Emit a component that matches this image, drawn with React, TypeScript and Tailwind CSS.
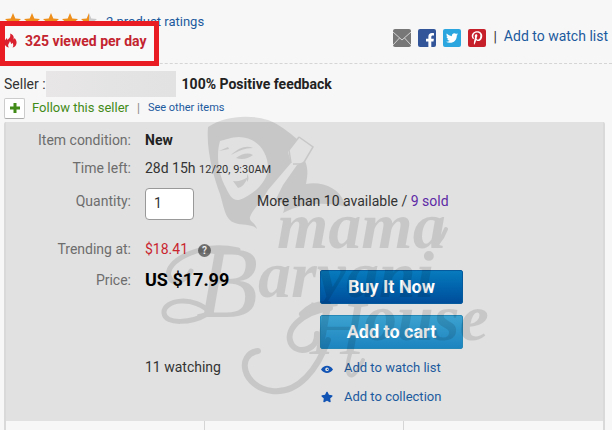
import type { ReactNode } from "react";
import { FaFacebookF, FaPinterestP, FaStar, FaTwitter } from "react-icons/fa";

function ShareButton({
  label,
  className,
  children,
}: {
  label: string;
  className: string;
  children: ReactNode;
}) {
  return (
    <a
      href="#share"
      aria-label={label}
      className={`flex h-[18px] w-[18px] items-center justify-center overflow-hidden rounded-xs text-white ${className}`}
    >
      {children}
    </a>
  );
}

function Stars() {
  return (
    <svg viewBox="0 0 96 18" className="h-[18px] w-24" role="img" aria-label="4.5 stars">
      <defs>
        <linearGradient id="half-star">
          <stop offset="0.5" stopColor="#ee8f1c" />
          <stop offset="0.5" stopColor="#c9c9c9" />
        </linearGradient>
      </defs>
      {[0, 19, 38, 57, 76].map((x) => (
        <path
          key={x}
          transform={`translate(${x} 0)`}
          d="M9 1l2.300 5.400 5.700.500-4.300 3.900 1.300 5.700L9 13.600l-5 2.900 1.300-5.700L1 6.900l5.700-.500z"
          fill={x === 76 ? "url(#half-star)" : "#ee8f1c"}
        />
      ))}
    </svg>
  );
}

function Flame() {
  return (
    <svg viewBox="0 0 13 15" className="mt-[3px] -ml-px h-[15px] w-[13px]" aria-hidden="true">
      <path
        d="M6 .5C9.500 1.500 10.200 4 9.500 6.500C10.200 6.200 10.500 5.600 10.500 5C12.500 7 13.200 9.500 12 12C11.300 13.500 10 14.200 8.500 14.500C9.700 12.700 9.500 11 8.200 9.800C8 10.600 7.500 11 7 11.100C7 9.800 6.700 8.800 5.800 8.200C5.800 9.800 4.200 10.600 4.100 12.200C4.100 13.200 4.400 14 5 14.500C2 14 .3 12 .4 9.500C.5 7.500 1.800 6.200 2.900 5C3.200 5.700 3.200 6.300 3 7C5.700 5.500 7 3 6 .5Z"
        fill="#d9212f"
      />
    </svg>
  );
}

function Watermark() {
  return (
    <svg
      viewBox="156 114 336 290"
      className="pointer-events-none absolute -top-2 left-[152px] h-[290px] w-[336px]"
      aria-hidden="true"
    >
      <g opacity="0.11">
        <path
          fillRule="evenodd"
          d="M208 127C224 116 249 114 268 120C279 124 290 133 297 139L288 152L291 163L268 190C262 201 252 210 250 217C249 222 255 222 257 229C251 223 242 226 235 223C225 220 224 207 220 194C214 178 206 151 208 127ZM220 141C216 154 218 174 226 188C229 194 232 201 239 200C254 195 268 181 268 168C268 151 256 137 239 137C231 137 225 140 220 141Z"
        />
        <path d="M305 161C309 170 307 178 306 184C322 181 339 188 344 202L347 207C325 202 304 202 283 213C287 205 281 200 274 203L283 185L297 165Z" />
        <path d="M231 155C239 147 247 145 253 148C244 148 239 151 231 155ZM236 158Q246 151 253 155Q245 161 236 158ZM233 181Q241 182 248 177Q244 187 238 188ZM247 174Q250 178 247 182ZM219 151L228 147L229 149Z" />
        <path
          d="M299 137L313 147L303 164L293 164M299 137L289 150L291 163"
          fill="none"
          stroke="black"
          strokeWidth="1.5"
        />
        <g fill="none" stroke="black" strokeLinecap="round">
          <path
            strokeWidth="5"
            d="M238 250C200 241 164 262 169 276C172 287 186 281 191 271M212 314C194 294 163 300 164 313C165 325 192 323 207 314"
          />
          <path strokeWidth="6" d="M258 351C236 354 242 387 272 391C299 394 318 368 328 340" />
          <path
            strokeWidth="6"
            d="M317 334C318 349 300 355 292 345C283 331 301 312 330 308M302 314Q312 303 328 304"
          />
          <path strokeWidth="4" d="M350 354C344 373 350 388 363 360M438 243Q443 237 446 229" />
        </g>
        <g className="font-['Liberation_Serif',serif] font-bold italic">
          <text x="277" y="248" fontSize="66">mama</text>
          <text x="196" y="317" fontSize="102" className="font-normal">B</text>
          <text x="258" y="297" fontSize="66">aryani</text>
          <text x="310" y="354" fontSize="76" className="font-normal">H</text>
          <text x="364" y="340" fontSize="66">ouse</text>
        </g>
      </g>
    </svg>
  );
}

function Label({ children, htmlFor }: { children: ReactNode; htmlFor?: string }) {
  const className = "mr-[14px] w-[127px] shrink-0 text-right text-[#6d6d6d]";
  return htmlFor ? (
    <label htmlFor={htmlFor} className={className}>
      {children}
    </label>
  ) : (
    <span className={className}>{children}</span>
  );
}

function Cta({ className, children }: { className: string; children: ReactNode }) {
  return (
    <button
      type="button"
      className={`h-[34px] w-[143px] rounded-xs border bg-linear-to-b text-lg leading-none font-bold text-white ${className}`}
    >
      {children}
    </button>
  );
}

export default function App() {
  return (
    <div className="flex min-h-screen flex-col bg-[#f7f7f7] font-['Roboto',sans-serif] text-sm leading-5 text-[#333]">
      <header className="relative flex h-16 justify-between border-b border-dashed border-[#d5d5d5]">
        <div className="flex items-start gap-[6px] pt-3 pl-1">
          <Stars />
          <a href="#ratings" className="text-[13px] text-[#1c5a9e]">
            2 product ratings
          </a>
        </div>
        <div className="absolute top-[21px] left-0 flex h-[45px] w-[159px] items-start gap-2 border-[5px] border-[#e91c24] bg-[#f9f9f9] pt-1 font-bold whitespace-nowrap text-[#c3242f]">
          <Flame />
          <span className="leading-[22px]">325 viewed per day</span>
        </div>
        <div className="flex items-start gap-[7px] pt-[29px] pr-1">
          <ShareButton label="Email" className="bg-[#777]">
            <svg viewBox="0 0 18 18" fill="none" stroke="#d3d3d3" className="h-[18px] w-[18px]">
              <path d="M0 3l9 8 9-8M0 16l6.500-7M18 16l-6.500-7" />
            </svg>
          </ShareButton>
          <ShareButton label="Facebook" className="bg-[#32559a]">
            <FaFacebookF className="mt-1 ml-1.5 h-[15px] w-[12px]" />
          </ShareButton>
          <ShareButton label="Twitter" className="bg-[#2ba6df]">
            <FaTwitter className="h-3 w-3" />
          </ShareButton>
          <ShareButton label="Pinterest" className="bg-[#c6202b]">
            <FaPinterestP className="h-[14px] w-[14px]" />
          </ShareButton>
          <span className="leading-4">|</span>
          <a href="#watch" className="-mt-0.5 text-sm leading-[18px] text-[#1c5a9e]">
            Add to watch list
          </a>
        </div>
      </header>

      <section className="px-1 pt-[9px] pb-[3px]">
        <div className="flex h-[22px] items-center">
          <span>Seller :</span>
          <span className="mr-[6px] h-[26px] w-[130px] bg-linear-to-r from-[#e8e6e6] to-[#e2e2e2]" />
          <strong className="text-[#222]">100% Positive feedback</strong>
        </div>
        <div className="mt-0.5 flex h-[22px] items-center">
          <button
            type="button"
            aria-label="Follow"
            className="mr-[7px] flex h-[21px] w-[21px] items-center justify-center rounded-xs border border-[#ccc] border-b-[#aaa] bg-white"
          >
            <svg viewBox="0 0 10 10" className="h-[10px] w-[10px]">
              <path d="M3.500 0h3v3.500H10v3H6.500V10h-3V6.500H0v-3h3.500z" fill="#438b19" />
            </svg>
          </button>
          <a href="#follow" className="text-[13px] text-[#438b19]">
            Follow this seller
          </a>
          <span className="mx-2 text-xs text-[#888]">|</span>
          <a href="#items" className="text-[11px] text-[#1c5a9e]">
            See other items
          </a>
        </div>
      </section>

      <main className="mr-[7px] ml-1 flex flex-1 flex-col rounded-t-xs border-x-2 border-[#d9d9d9] bg-[#e1e1e1]">
        <div className="relative -mx-0.5 pt-2 pb-[14px]">
          <div className="flex">
            <Label>Item condition:</Label>
            <strong className="text-[#222]">New</strong>
          </div>
          <div className="mt-2 flex">
            <Label>Time left:</Label>
            <span>
              28d 15h <span className="text-[11px]">12/20, 9:30AM</span>
            </span>
          </div>
          <div className="mt-2 flex items-start leading-[26px]">
            <Label htmlFor="quantity">Quantity:</Label>
            <input
              id="quantity"
              defaultValue="1"
              className="h-8 w-[49px] rounded-sm border border-[#999] bg-white pr-2 pb-0.5 pl-2"
            />
            <span className="ml-[63px]">
              More than 10 available /{" "}
              <a href="#sold" className="text-[#5d2aa5]">
                9 sold
              </a>
            </span>
          </div>
          <div className="mt-[19px] flex">
            <Label>Trending at:</Label>
            <span className="text-[#c9252f]">$18.41</span>
            <button
              type="button"
              aria-label="Help"
              className="mt-[5px] ml-[10px] h-[13px] w-[13px] rounded-full bg-[#717171] text-[10px] leading-[13px] font-bold text-white"
            >
              ?
            </button>
          </div>
          <div className="mt-[11px] flex">
            <div className="w-[316px]">
              <div className="flex">
                <Label>Price:</Label>
                <strong className="text-lg leading-5 text-black">US $17.99</strong>
              </div>
              <p className="mt-[67px] ml-[141px]">11 watching</p>
            </div>
            <div className="flex flex-col items-start">
              <Cta className="border-[#055a9d] from-[#087bbd] to-[#004d9b]">Buy It Now</Cta>
              <Cta className="mt-[11px] border-[#2588b7] from-[#3ba2d0] to-[#1c84c0]">
                Add to cart
              </Cta>
              <a
                href="#watch"
                className="mt-[9px] flex items-center gap-[10px] text-[13px] text-[#1c5a9e]"
              >
                <svg viewBox="0 0 14 14" className="h-[14px] w-[14px]">
                  <path
                    fillRule="evenodd"
                    d="M1 8.500C4 3.500 10 3.500 13 8.500C10 13 4 13 1 8.500ZM7 6.600A1.800 1.800 0 1 0 7 10.200A1.800 1.800 0 1 0 7 6.600Z"
                    fill="#1254b4"
                  />
                  <circle cx="7.500" cy="8.400" r="0.700" fill="#1254b4" />
                </svg>
                Add to watch list
              </a>
              <a
                href="#collection"
                className="mt-[9px] flex items-center gap-[10px] text-[13px] text-[#1c5a9e]"
              >
                <span className="flex w-[14px] justify-center">
                  <FaStar className="h-3 w-3 text-[#1254b4]" />
                </span>
                Add to collection
              </a>
            </div>
          </div>
          <Watermark />
        </div>
        <div className="grid min-h-2 flex-1 grid-cols-3 divide-x divide-[#d5d5d5] bg-[#f7f7f7]">
          <div />
          <div />
          <div />
        </div>
      </main>
    </div>
  );
}
